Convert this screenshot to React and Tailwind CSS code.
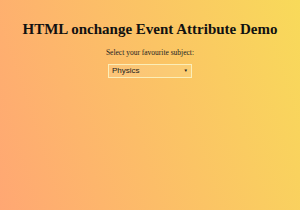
export default function App() {
  return (
    <div className="w-[300px] h-[210px] bg-[linear-gradient(72deg,#ffa773,#f8da5a)] flex flex-col items-center" style={{fontFamily: '"Liberation Serif", serif'}}>
      <h1 className="mt-[20px] text-[15px] font-bold leading-[18px] text-[#111]">HTML onchange Event Attribute Demo</h1>
      <p className="mt-[10px] text-[7.5px] leading-[9px] text-[#222]">Select your favourite subject:</p>
      <div className="mt-[7px] w-[84px] h-[14px] border border-[#fbeeb8] flex items-center justify-between pl-[3px] pr-[3px] bg-white/10" style={{fontFamily: '"Liberation Sans", sans-serif'}}>
        <span className="text-[8px] text-[#222] leading-none">Physics</span>
        <span className="text-[4.5px] text-[#222] leading-none">▼</span>
      </div>
    </div>
  );
}
